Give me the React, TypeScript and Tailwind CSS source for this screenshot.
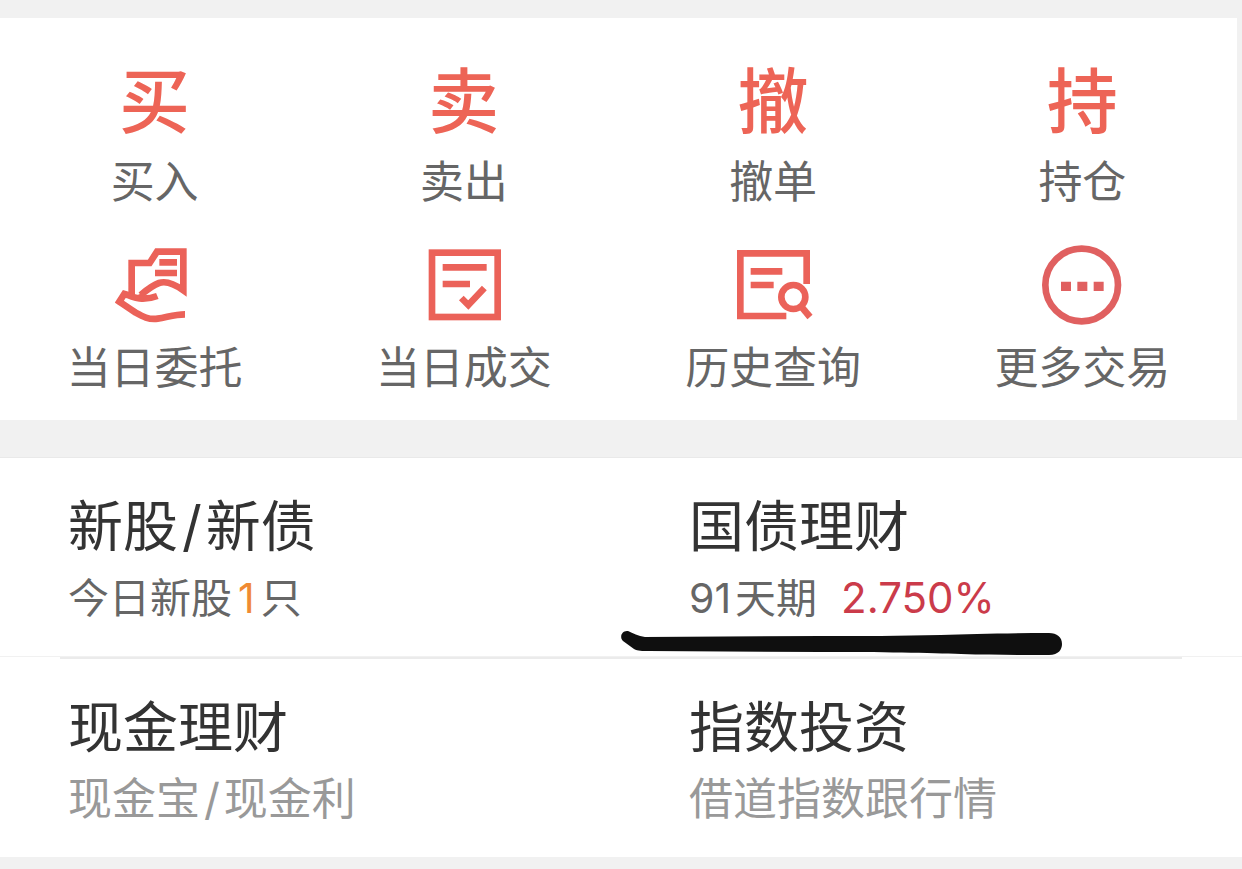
import type { ReactNode } from 'react'

const iconProps = {
  viewBox: '0 0 240 240',
  fill: 'none',
  stroke: 'currentColor',
  strokeWidth: 20,
  className: 'w-20 h-20',
  'aria-hidden': true,
}

function EntrustIcon() {
  return (
    <svg {...iconProps}>
      <path d="M50 158V54H104L126 20H205V136C180 118 155 106 132 114C112 121 94 136 77 150" />
      <path d="M133 52H186M120 84H186" />
      <path d="M77 146L84 161C102 161 112 159 127 153" />
      <path d="M84 161C66 161 52 156 38 150L28 147L13 170C28 180 42 190 62 203C82 214 102 225 128 221C156 217 178 208 210 208" />
    </svg>
  )
}

function DealIcon() {
  return (
    <svg {...iconProps}>
      <rect x="24" y="23" width="197" height="193" />
      <path d="M56 67H188M56 117H138" />
      <path d="M112 159L133 180L181 129" />
    </svg>
  )
}

function HistoryIcon() {
  return (
    <svg {...iconProps}>
      <path d="M221 117V25H22V213H160" />
      <path d="M53 79H148M53 120H122" />
      <circle cx="181" cy="156" r="36" />
      <path d="M205 185L231 216" />
    </svg>
  )
}

function MoreIcon() {
  return (
    <svg {...iconProps}>
      <circle cx="119" cy="120" r="109" />
      <path d="M57 124H87M106 124H136M155 124H185" strokeWidth="28" />
    </svg>
  )
}

const glyph = (char: string) => (
  <span className="pt-1 text-[71px] leading-20 font-medium">{char}</span>
)

const actions: { label: string; icon: ReactNode; color: string }[] = [
  { label: '买入', icon: glyph('买'), color: 'text-[#ed6456]' },
  { label: '卖出', icon: glyph('卖'), color: 'text-[#ed6456]' },
  { label: '撤单', icon: glyph('撤'), color: 'text-[#ed6456]' },
  { label: '持仓', icon: glyph('持'), color: 'text-[#ed6456]' },
  { label: '当日委托', icon: <EntrustIcon />, color: 'text-[#eb6259]' },
  { label: '当日成交', icon: <DealIcon />, color: 'text-[#eb6259]' },
  { label: '历史查询', icon: <HistoryIcon />, color: 'text-[#eb6259]' },
  { label: '更多交易', icon: <MoreIcon />, color: 'text-[#e06060]' },
]

function Product({ title, children }: { title: ReactNode; children: ReactNode }) {
  return (
    <a href="#" className="relative flex flex-col gap-1.5 pl-[68px] pt-8 pb-7">
      <h2 className="text-[55px] leading-[72px] text-[#333]">{title}</h2>
      {children}
    </a>
  )
}

const slash = <span className="px-1">/</span>

// hand-drawn marker line under the rate
function MarkerLine() {
  return (
    <svg
      viewBox="0 0 444 28"
      className="absolute left-0 top-[171px] w-[444px] h-7"
      fill="#0f0f0f"
      aria-hidden="true"
    >
      <path d="M7 2C1 1-2 8 2 12L13 20C17 22 21 22 28 22L200 23C260 23 310 24 340 25C370 26 400 26 428 26C438 26 441 20 441 15C441 8 436 4 428 4C390 4 350 5 320 6C280 7 240 7 200 7L24 8C17 7 12 4 7 2Z" />
    </svg>
  )
}

export default function App() {
  return (
    <div className="w-full bg-[#f1f1f1] pt-[18px] pb-3 font-['Inter','Noto_Sans_CJK_SC',sans-serif]">
      <div className="mr-[5px] bg-white grid grid-cols-4 gap-y-[33px] pt-[41px] pb-[22px]">
        {actions.map((a) => (
          <button key={a.label} type="button" className="flex flex-col items-center gap-[13px]">
            <span className={a.color + ' h-20 flex items-center justify-center'}>{a.icon}</span>
            <span className="text-[44px] leading-[60px] text-[#666]">{a.label}</span>
          </button>
        ))}
      </div>

      <div className="mt-[37px] bg-white border-t border-[#e9e9e9]">
        <div className="grid grid-cols-2 border-b border-[#f1f1f1]">
          <Product title={<>新股{slash}新债</>}>
            <p className="text-[41px] leading-[60px] text-[#666]">
              今日新股<span className="px-1.5 text-[#f08a33]">1</span>只
            </p>
          </Product>
          <Product title="国债理财">
            <p className="flex gap-6 text-[41px] leading-[60px] text-[#666]">
              <span>
                <span className="pr-1">91</span>天期
              </span>
              <span className="text-[42px] text-[#cb3b4a]">2.750%</span>
            </p>
            <MarkerLine />
          </Product>
        </div>
        <div className="mx-[60px] h-0.5 bg-[#ebebeb]" />
        <div className="grid grid-cols-2">
          <Product title="现金理财">
            <p className="text-[44px] leading-[60px] text-[#999]">现金宝{slash}现金利</p>
          </Product>
          <Product title="指数投资">
            <p className="text-[44px] leading-[60px] text-[#999]">借道指数跟行情</p>
          </Product>
        </div>
      </div>
    </div>
  )
}
